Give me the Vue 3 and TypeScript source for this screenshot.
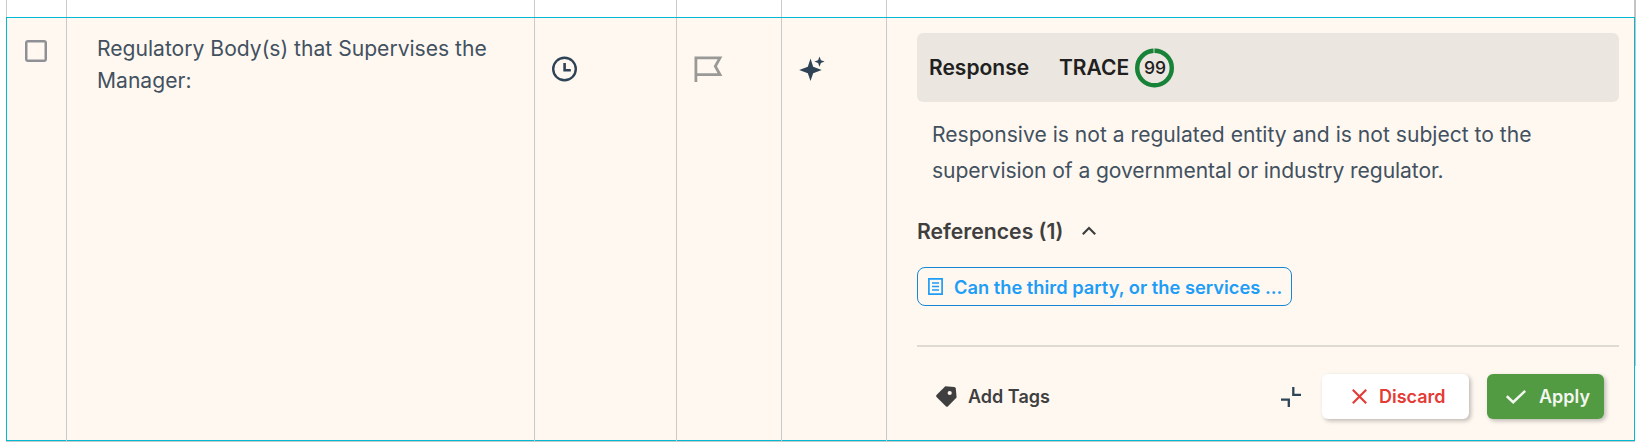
<script setup lang="ts">
const question = ['Regulatory Body(s) that Supervises the', 'Manager:']
const answer = [
  'Responsive is not a regulated entity and is not subject to the',
  'supervision of a governmental or industry regulator.',
]
const traceScore = 99
const references = ['Can the third party, or the services ...']
</script>

<template>
  <div class="sheet">
    <div class="row previous">
      <div v-for="n in 6" :key="n" class="cell"></div>
    </div>
    <div class="body">
      <div class="row active">
        <div class="cell select"><span class="checkbox"></span></div>
        <div class="cell question">
          <div v-for="line in question" :key="line">{{ line }}</div>
        </div>
        <div class="cell status">
          <svg width="26" height="26" viewBox="0 0 26 26" fill="none" stroke="#2f4356" stroke-width="2.4">
            <circle cx="12.5" cy="13" r="11.3" />
            <path d="M12.6 7v7.2h6.2" stroke-width="2.6" />
          </svg>
        </div>
        <div class="cell flag">
          <svg width="29" height="27" viewBox="0 0 29 27" fill="none" stroke="#999997" stroke-width="2.8">
            <path d="M1.9 27.5V2.9H26L21.3 11.3L26 19.7H2" />
          </svg>
        </div>
        <div class="cell magic">
          <svg width="26" height="26" viewBox="0 0 26 26" fill="#2f4356">
            <path d="M11.5 2.5L14.2 10.8L22.7 14L14.2 17.2L11.5 25L8.8 17.2L.2 14L8.8 10.8Z" />
            <path d="M20.5 .5L21.9 4.2L25.6 5.6L21.9 7L20.5 10.8L19.1 7L15.4 5.6L19.1 4.2Z" />
          </svg>
        </div>
        <div class="cell response">
          <header class="head">
            <span class="head-label">Response</span>
            <span class="head-trace">TRACE</span>
            <span class="score">
              <svg class="ring" width="40" height="40" viewBox="0 0 40 40" fill="none" stroke-width="4.4">
                <circle cx="19.5" cy="20" r="17.3" stroke="#c9d4c6" />
                <circle cx="19.5" cy="20" r="17.3" stroke="#188338" pathLength="100" :stroke-dasharray="`${traceScore} 100`" transform="rotate(-90 19.5 20)" />
              </svg>
              <span class="score-value">{{ traceScore }}</span>
            </span>
          </header>
          <div class="answer">
            <div v-for="line in answer" :key="line" class="answer-line">{{ line }}</div>
          </div>
          <div class="refs">
            <span class="refs-title">References ({{ references.length }})</span>
            <svg width="14" height="10" viewBox="0 0 14 10" fill="none" stroke="#3c3c3c" stroke-width="2.1">
              <path d="M.8 8.2L7 2L13.2 8.2" />
            </svg>
          </div>
          <div v-for="item in references" :key="item" class="chip">
            <svg width="15" height="17" viewBox="0 0 15 17" fill="none" stroke="#1e9df7" stroke-width="1.7">
              <path d="M.9 .9H14.1V16.1H.9ZM4 5H11M4 8.5H11M4 12H11" />
            </svg>
            <span class="chip-text">{{ item }}</span>
          </div>
          <footer class="actions">
            <svg class="tag" width="21" height="21" viewBox="0 0 21 21">
              <path d="M9.3 .2L18.2 1Q19.6 1.2 19.8 2.6L20.6 11.5L11.8 20.4Q11 21.2 10.1 20.4L.5 10.9Q-.2 10 .5 9.1Z" fill="#3f3f3f" />
              <circle cx="13.7" cy="7" r="2.1" fill="#fff8f1" />
            </svg>
            <span class="tag-text">Add Tags</span>
            <svg class="collapse" width="20" height="20" viewBox="0 0 20 20" fill="none" stroke="#2f4356" stroke-width="2.3">
              <path d="M12.3 0V7.8H20M0 12.7H7.8V20" />
            </svg>
            <button class="btn discard">
              <svg width="15" height="15" viewBox="0 0 15 15" fill="none" stroke="#e53a35" stroke-width="2.1">
                <path d="M.8 .8L14.2 14.2M14.2 .8L.8 14.2" />
              </svg>
              <span>Discard</span>
            </button>
            <button class="btn apply">
              <svg width="20" height="14" viewBox="0 0 20 14" fill="none" stroke="#f3f7f0" stroke-width="2.5">
                <path d="M.8 6.2L7.2 12.2L19.2 .9" />
              </svg>
              <span>Apply</span>
            </button>
          </footer>
        </div>
      </div>
      <div class="scrollbar"></div>
    </div>
  </div>
</template>

<style>
body {
  background: #fff;
}
</style>

<style scoped>
.sheet {
  width: 1636px;
  height: 442px;
  box-sizing: border-box;
  padding-left: 6px;
  overflow: hidden;
  font-family: Inter, "Liberation Sans", sans-serif;
}
svg {
  display: block;
  flex: none;
}
.body {
  display: flex;
}
.scrollbar {
  width: 1px;
  height: 349px;
  background: #c4c4c4;
}
.row {
  display: grid;
  flex: none;
  box-sizing: border-box;
}
.cell {
  box-sizing: border-box;
  min-width: 0;
  border-right: 1px solid #cacaca;
}
.previous {
  height: 17px;
  width: 1630px;
  grid-template-columns: 60px 468px 142px 105px 105px 749px;
  border-left: 1px solid #cacaca;
}
.previous .cell:last-child {
  border-right: 2px solid #c4c4c4;
}
.active {
  width: 1629px;
  height: 424px;
  grid-template-columns: 60px 468px 142px 105px 105px 747px;
  border: 1px solid #00b9d3;
  background: #fff8f1;
  box-shadow: 0 1px 0 #cacaca;
}
.active .cell {
  margin-bottom: -1px;
}
.active .cell:last-child {
  border-right: 0;
}
.select {
  padding: 22px 0 0 18px;
}
.checkbox {
  display: block;
  width: 22px;
  height: 22px;
  box-sizing: border-box;
  border: 2px solid #8f9095;
  border-radius: 3px;
  box-shadow: inset 0 0 0 0.5px #8f9095;
}
.question {
  padding: 15px 0 0 30px;
  font-size: 21.1px;
  line-height: 32px;
  white-space: nowrap;
  color: #42515f;
}
.status {
  padding: 38px 0 0 17px;
}
.flag {
  padding: 37px 0 0 17px;
}
.magic {
  padding: 38px 0 0 17px;
}
.response {
  padding: 15px 15px 0 30px;
}
.head {
  display: flex;
  align-items: center;
  height: 69px;
  padding-left: 12px;
  border-radius: 6px;
  background: #ebe6df;
  font-size: 21px;
  font-weight: 600;
  color: #202020;
}
.head-label {
  width: 130px;
}
.head-trace {
  width: 76px;
}
.score {
  display: grid;
  place-items: center;
  width: 40px;
  height: 40px;
}
.ring,
.score-value {
  grid-area: 1 / 1;
}
.score-value {
  font-size: 17.5px;
  font-weight: 500;
}
.answer {
  padding: 15px 0 0 15px;
  font-size: 21.1px;
  line-height: 36px;
  white-space: nowrap;
  color: #42515f;
}
.answer-line:last-child {
  letter-spacing: -0.09px;
}
.refs {
  display: flex;
  align-items: center;
  gap: 19px;
  height: 30px;
  margin-top: 27px;
  font-size: 21.2px;
  font-weight: 600;
  color: #3f3f3f;
}
.chip {
  display: flex;
  align-items: center;
  gap: 10px;
  box-sizing: border-box;
  width: 375px;
  height: 39px;
  margin-top: 21px;
  padding-left: 10px;
  border: 1px solid #1787d3;
  border-radius: 8px;
  font-size: 18.3px;
  font-weight: 600;
  white-space: nowrap;
  color: #1e9df7;
}
.chip-text {
  margin-left: 1px;
}
.actions {
  display: flex;
  align-items: center;
  height: 101px;
  box-sizing: border-box;
  margin-top: 39px;
  padding: 0 15px 0 19px;
  border-top: 2px solid #dfdbd3;
}
.tag-text {
  margin-left: 11px;
  font-size: 18px;
  font-weight: 600;
  color: #3f3f3f;
}
.collapse {
  margin-left: auto;
}
.btn {
  display: flex;
  align-items: center;
  box-sizing: border-box;
  height: 45px;
  padding: 0;
  border: 0;
  border-radius: 6px;
  font: 600 18px Inter, "Liberation Sans", sans-serif;
  box-shadow: 2px 2px 4px rgba(0, 0, 0, 0.25);
}
.discard {
  width: 147px;
  margin-left: 21px;
  padding-left: 30px;
  gap: 12px;
  background: #fff;
  color: #e53a35;
}
.apply {
  width: 117px;
  margin-left: 18px;
  padding-left: 19px;
  gap: 13px;
  background: #539b43;
  color: #f3f7f0;
}
</style>
